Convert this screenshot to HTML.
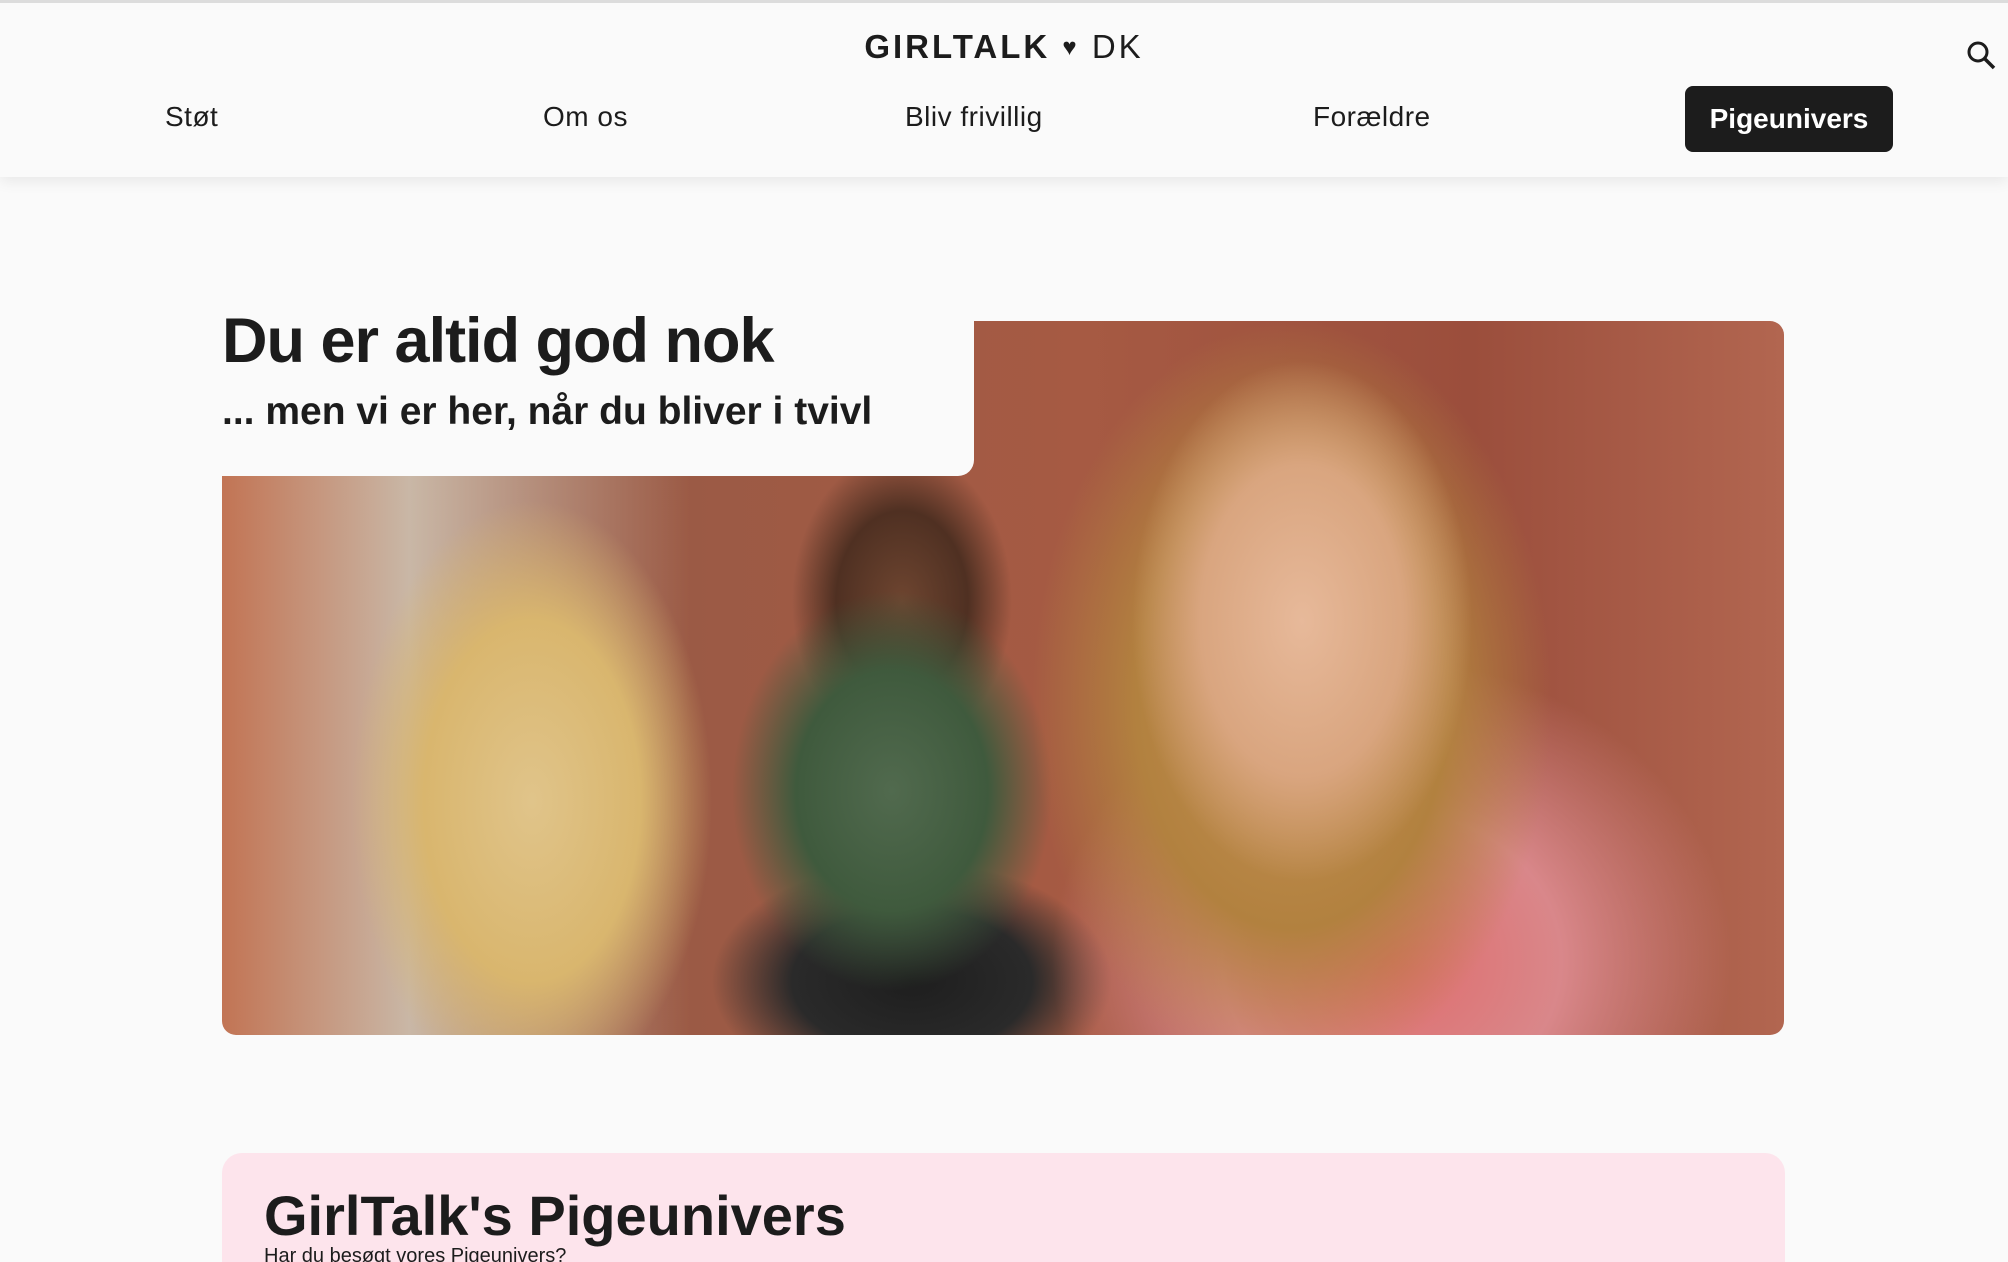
<!DOCTYPE html>
<html><head><meta charset="utf-8"><style>
*{margin:0;padding:0;box-sizing:border-box}
html,body{width:2008px;height:1262px;overflow:hidden}
body{background:#fafafa;font-family:"Liberation Sans",sans-serif;color:#1c1c1c;position:relative}
.hdr{position:absolute;left:0;top:0;width:2008px;height:177px;background:#fafafa;border-top:3px solid #dcdcdc;box-shadow:0 4px 14px rgba(0,0,0,.08)}
.logo{position:absolute;left:0;width:2008px;top:25px;text-align:center;font-size:33px;letter-spacing:3px}
.logo b{font-weight:700}
.nav{position:absolute;top:98px;font-size:28px;letter-spacing:.5px}
.btn{position:absolute;left:1685px;top:83px;width:208px;height:66px;background:#1c1c1c;color:#fff;border-radius:8px;font-weight:700;font-size:28px;text-align:center;line-height:66px}
h1{position:absolute;left:222px;top:305px;font-size:63px;font-weight:700;letter-spacing:-1px}
h2{position:absolute;left:222px;top:390px;font-size:39px;font-weight:700}
.img{position:absolute;left:222px;top:321px;width:1562px;height:714px;border-radius:14px;overflow:hidden;
background:
radial-gradient(ellipse 170px 260px at 1080px 300px,#e7b99a 0,#d9a57f 60%,transparent 100%),
radial-gradient(ellipse 260px 380px at 1070px 380px,#c49155 0,#b2813f 60%,transparent 100%),
radial-gradient(ellipse 340px 300px at 1170px 640px,#e06c6c 0,#d9878a 50%,transparent 100%),
radial-gradient(ellipse 180px 300px at 310px 480px,#e0c48a 0,#d9b66e 60%,transparent 100%),
radial-gradient(ellipse 160px 200px at 670px 470px,#516a4e 0,#3f5a3d 60%,transparent 100%),
radial-gradient(ellipse 110px 150px at 680px 280px,#6e4530 0,#4f3022 60%,transparent 100%),
radial-gradient(ellipse 200px 120px at 690px 660px,#1e1e1e 0,#2a2a2a 60%,transparent 100%),
linear-gradient(90deg,#c27454 0,#c9b7a6 12%,#9b5a45 30%,#a65a43 55%,#9b4e3c 80%,#b26650 100%);}
.cut{position:absolute;left:222px;top:300px;width:752px;height:176px;background:#fafafa;border-bottom-right-radius:16px}
.pink{position:absolute;left:222px;top:1153px;width:1563px;height:109px;background:#fde4ec;border-radius:20px 20px 0 0;overflow:hidden}
.pink h3{position:absolute;left:42px;top:30px;font-size:56px;font-weight:700}
.pink p{position:absolute;left:42px;top:92px;font-size:20px}
</style></head><body>
<div class="hdr">
<div class="logo"><b>GIRLTALK</b> <span style="font-size:24px;vertical-align:3px">♥</span> DK</div>
<svg style="position:absolute;left:1966px;top:37px" width="30" height="30" viewBox="0 0 30 30"><circle cx="12" cy="12" r="9" fill="none" stroke="#1c1c1c" stroke-width="3"/><path d="M19 19l9 9" stroke="#1c1c1c" stroke-width="3.5"/></svg>
<div class="nav" style="left:165px">Støt</div>
<div class="nav" style="left:543px">Om os</div>
<div class="nav" style="left:905px">Bliv frivillig</div>
<div class="nav" style="left:1313px">Forældre</div>
<div class="btn">Pigeunivers</div>
</div>
<div class="img"></div>
<div class="cut"></div>
<h1>Du er altid god nok</h1>
<h2>... men vi er her, når du bliver i tvivl</h2>
<div class="pink"><h3>GirlTalk's Pigeunivers</h3><p>Har du besøgt vores Pigeunivers?</p></div>
</body></html>
